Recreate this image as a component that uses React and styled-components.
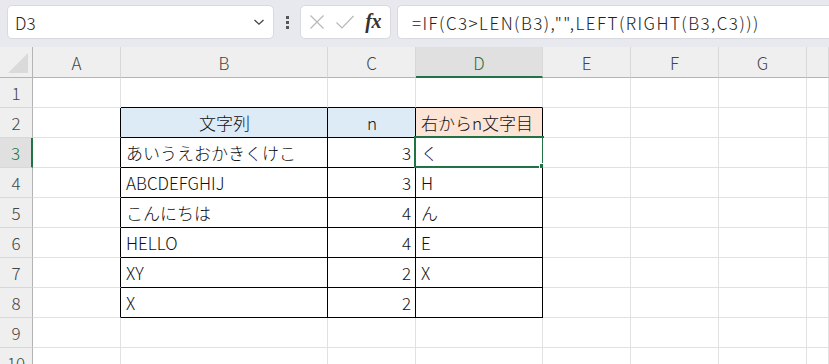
import React from "react";
import styled, { createGlobalStyle } from "styled-components";

const Global = createGlobalStyle`
  html, body { margin: 0; padding: 0; background: #fff; overflow: hidden; }
  body { font-family: "Noto Sans CJK JP", "Noto Sans", sans-serif; }
`;

const FONT = `"Noto Sans CJK JP", "Noto Sans", sans-serif`;

const Page = styled.div`
  width: 829px;
  height: 364px;
  overflow: hidden;
  display: flex;
  flex-direction: column;
`;

const Bar = styled.div`
  height: 47px;
  flex: none;
  background: #e7e9ee;
  display: flex;
  align-items: flex-start;
  padding: 5px 0 0 7px;
  box-sizing: border-box;
`;

const Box = styled.div`
  height: 34px;
  box-sizing: border-box;
  background: #fff;
  border: 1px solid #d8dadf;
  border-radius: 5px;
  display: flex;
  align-items: center;
  font-family: ${FONT};
  font-weight: 300;
  font-size: 17px;
  color: #222;
`;

const NameBox = styled(Box)`
  width: 267px;
  padding: 0 8px 0 7px;
  justify-content: space-between;
`;

const Dots = styled.div`
  width: 26px;
  height: 34px;
  display: flex;
  flex-direction: column;
  align-items: center;
  justify-content: center;
  gap: 2px;
  span {
    width: 3px;
    height: 3px;
    background: #555;
    display: block;
  }
`;

const FxBox = styled(Box)`
  width: 91px;
  padding: 0 9px 0 8px;
  justify-content: space-between;
  margin-right: 6px;
`;

const Fx = styled.span`
  font-family: "Liberation Serif", "DejaVu Serif", serif;
  font-style: italic;
  font-weight: bold;
  font-size: 20px;
  color: #333;
  letter-spacing: -0.5px;
  line-height: 1;
  margin-top: -2px;
`;

const FormulaBox = styled(Box)`
  flex: 1;
  margin-right: -8px;
  border-right: none;
  border-top-right-radius: 0;
  border-bottom-right-radius: 0;
  padding-left: 14px;
  letter-spacing: 1.45px;
`;

const Sheet = styled.div`
  display: grid;
  grid-template-columns: 33px 88px 207px 88px 127px 88px 88px 88px 1fr;
  grid-template-rows: 31px repeat(10, 30px);
  font-family: ${FONT};
  font-weight: 300;
`;

const ColHead = styled.div`
  background: ${(p) => (p.$sel ? "#e0e0e0" : "#efefef")};
  border-right: 1px solid #d8d8d8;
  border-bottom: ${(p) => (p.$sel ? "2px solid #217346" : "1px solid #b4b4b4")};
  box-sizing: border-box;
  display: flex;
  align-items: center;
  justify-content: center;
  font-size: 17px;
  color: ${(p) => (p.$sel ? "#217346" : "#444")};
  padding-top: ${(p) => (p.$sel ? "1px" : "0")};
`;

const Corner = styled(ColHead)`
  position: relative;
  border-right: 1px solid #b4b4b4;
  svg { position: absolute; right: 4px; bottom: 4px; }
`;

const RowHead = styled.div`
  background: ${(p) => (p.$sel ? "#e0e0e0" : "#efefef")};
  border-right: ${(p) => (p.$sel ? "2px solid #217346" : "1px solid #b4b4b4")};
  border-bottom: 1px solid #d8d8d8;
  box-sizing: border-box;
  display: flex;
  align-items: center;
  justify-content: center;
  font-size: 17px;
  color: ${(p) => (p.$sel ? "#217346" : "#444")};
`;

const Cell = styled.div`
  position: relative;
  box-sizing: border-box;
  border-right: 1px solid ${(p) => (p.$br ? "#000" : "#e1e1e1")};
  border-bottom: 1px solid ${(p) => (p.$bb ? "#000" : "#e1e1e1")};
  background: ${(p) => p.$bg || "#fff"};
  display: flex;
  align-items: center;
  justify-content: ${(p) =>
    p.$align === "right" ? "flex-end" : p.$align === "center" ? "center" : "flex-start"};
  padding: 0 4px 0 5px;
  font-size: 17px;
  color: #111;
  white-space: nowrap;
  overflow: visible;
`;

const Selection = styled.div`
  position: absolute;
  left: -2px;
  top: -2px;
  width: 130px;
  height: 32px;
  box-sizing: border-box;
  border: 2px solid #217346;
  pointer-events: none;
  &::after {
    content: "";
    position: absolute;
    right: -5px;
    bottom: -5px;
    width: 6px;
    height: 6px;
    background: #217346;
    border: 1px solid #fff;
  }
`;

const cols = ["A", "B", "C", "D", "E", "F", "G", ""];

const data = {
  2: ["文字列", "n", "右からn文字目"],
  3: ["あいうえおかきくけこ", "3", "く"],
  4: ["ABCDEFGHIJ", "3", "H"],
  5: ["こんにちは", "4", "ん"],
  6: ["HELLO", "4", "E"],
  7: ["XY", "2", "X"],
  8: ["X", "2", ""],
};

function cellProps(r, c) {
  const inTable = r >= 2 && r <= 8 && c >= 1 && c <= 3;
  const br = inTable || (c === 0 && r >= 2 && r <= 8);
  const bb = inTable || (r === 1 && c >= 1 && c <= 3);
  let text = "";
  let align = "left";
  let bg;
  if (inTable) {
    text = data[r][c - 1];
    if (r === 2) {
      if (c === 1 || c === 2) {
        bg = "#ddebf7";
        align = "center";
      } else {
        bg = "#fce4d6";
      }
    } else if (c === 2) {
      align = "right";
    }
  }
  return { br, bb, text, align, bg };
}

export default function App() {
  const rows = [];
  for (let r = 1; r <= 10; r++) {
    rows.push(
      <RowHead key={`rh${r}`} $sel={r === 3}>
        {r}
      </RowHead>
    );
    cols.forEach((_, c) => {
      const p = cellProps(r, c);
      rows.push(
        <Cell key={`c${r}-${c}`} $br={p.br} $bb={p.bb} $bg={p.bg} $align={p.align}>
          {p.text}
          {r === 3 && c === 3 && <Selection />}
        </Cell>
      );
    });
  }

  return (
    <Page>
      <Global />
      <Bar>
        <NameBox>
          <span>D3</span>
          <svg width="12" height="8" viewBox="0 0 12 8">
            <path d="M1.5 2 L6 6.2 L10.5 2" fill="none" stroke="#444" strokeWidth="1.3" />
          </svg>
        </NameBox>
        <Dots>
          <span />
          <span />
          <span />
        </Dots>
        <FxBox>
          <svg width="16" height="16" viewBox="0 0 16 16">
            <path d="M1.5 1.5 L14.5 14.5 M14.5 1.5 L1.5 14.5" stroke="#b8b8b8" strokeWidth="1.2" fill="none" />
          </svg>
          <svg width="20" height="16" viewBox="0 0 20 16">
            <path d="M1.5 8.5 L7 14 L18.5 2" stroke="#b8b8b8" strokeWidth="1.2" fill="none" />
          </svg>
          <Fx>fx</Fx>
        </FxBox>
        <FormulaBox>=IF(C3&gt;LEN(B3),"",LEFT(RIGHT(B3,C3)))</FormulaBox>
      </Bar>
      <Sheet>
        <Corner>
          <svg width="20" height="20" viewBox="0 0 20 20">
            <path d="M20 0 L20 20 L0 20 Z" fill="#dadada" />
          </svg>
        </Corner>
        {cols.map((c, i) => (
          <ColHead key={`h${i}`} $sel={c === "D"}>
            {c}
          </ColHead>
        ))}
        {rows}
      </Sheet>
    </Page>
  );
}
